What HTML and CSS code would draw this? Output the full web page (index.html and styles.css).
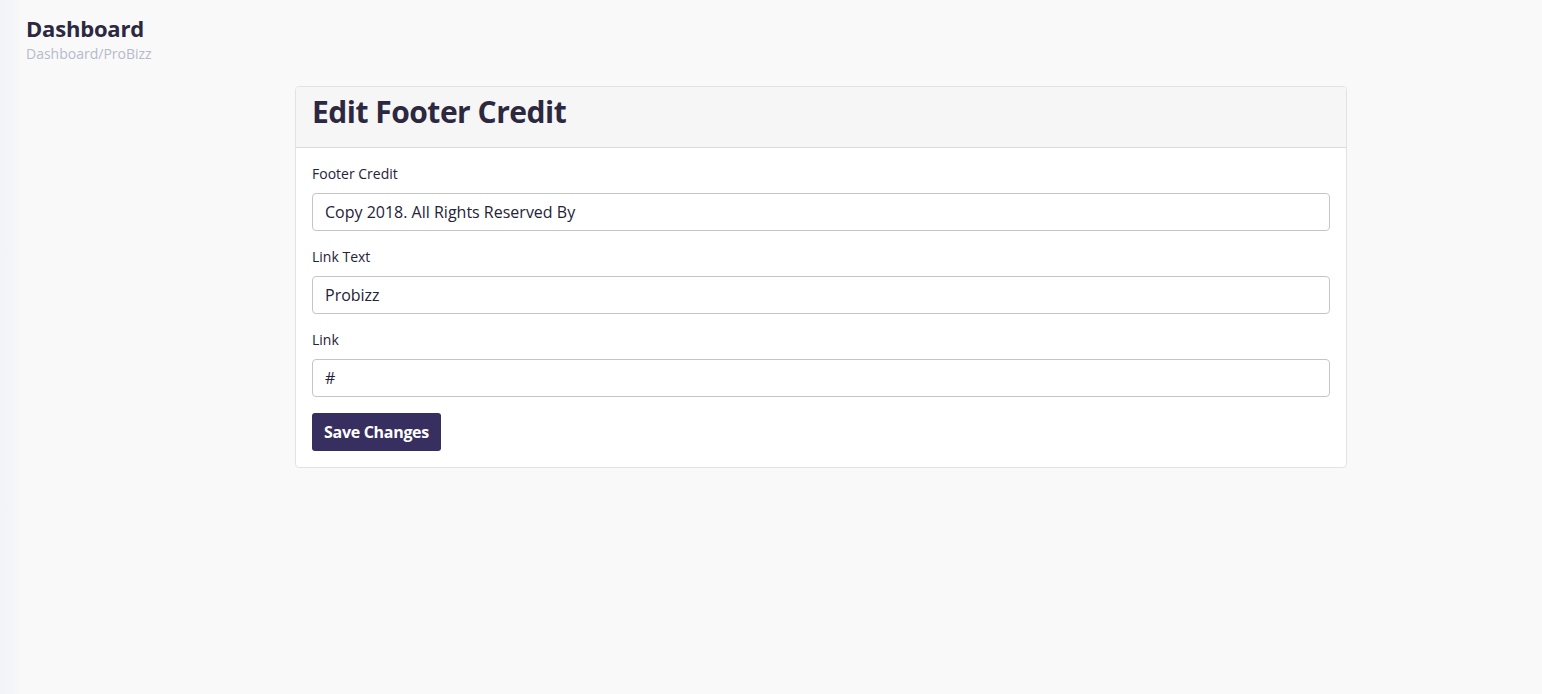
FILE: index.html
```html
<!DOCTYPE html>
<html>
<head>
<meta charset="utf-8">
<link rel="stylesheet" href="styles.css">
</head>
<body>
<div class="layout">
  <div class="edge"></div>
  <main class="main">
    <header class="page-head">
      <h1 class="page-title">Dashboard</h1>
      <div class="crumb">Dashboard/ProBizz</div>
    </header>
    <div class="content">
      <section class="card">
        <div class="card-head">
          <h2 class="card-title">Edit Footer Credit</h2>
        </div>
        <form class="card-body">
          <div class="field">
            <label class="label">Footer Credit</label>
            <input class="input" type="text" value="Copy 2018. All Rights Reserved By">
          </div>
          <div class="field">
            <label class="label">Link Text</label>
            <input class="input" type="text" value="Probizz">
          </div>
          <div class="field">
            <label class="label">Link</label>
            <input class="input" type="text" value="#">
          </div>
          <button class="btn" type="button">Save Changes</button>
        </form>
      </section>
    </div>
  </main>
</div>
</body>
</html>
```

FILE: styles.css
```css
* { box-sizing: border-box; }
html, body { margin: 0; height: 100%; }
body {
  background: #f9f9f9;
  font-family: "Open Sans", "Noto Sans", sans-serif;
  color: #2d2a42;
}
.layout { display: flex; min-height: 694px; }
.edge {
  width: 20px;
  flex: none;
  background: linear-gradient(to right, #f2f4f8 0%, #f4f5f8 60%, #f8f8f9 100%);
}
.main { flex: 1; padding: 13px 0 0 6px; }
.page-title {
  margin: 0;
  font-size: 22px;
  line-height: 30px;
  font-weight: 700;
  color: #2c2840;
  letter-spacing: -0.2px;
}
.crumb {
  font-size: 14px;
  line-height: 20px;
  color: #b5b9cd;
  margin-top: 1px;
}
.content { padding: 22px 0 0 269px; }
.card {
  width: 1052px;
  background: #fff;
  border: 1px solid #e3e3e3;
  border-radius: 4px;
  overflow: hidden;
}
.card-head {
  background: #f6f6f6;
  border-bottom: 1px solid #dcdcdc;
  height: 61px;
  padding: 0 16px 11px;
  display: flex;
  align-items: center;
}
.card-title {
  margin: 0;
  font-size: 30px;
  font-weight: 700;
  color: #2c2840;
  letter-spacing: -0.5px;
}
.card-body { padding: 16px 16px 16px 16px; }
.field { margin-bottom: 16px; }
.label {
  display: block;
  font-size: 14px;
  line-height: 20px;
  color: #25223a;
  margin-bottom: 9px;
}
.input {
  display: block;
  width: 100%;
  height: 38px;
  border: 1px solid #c3c5cc;
  border-radius: 4px;
  padding: 0 12px;
  font-family: inherit;
  font-size: 16px;
  color: #25223a;
  background: #fff;
  outline: none;
}
.btn {
  display: block;
  height: 38px;
  padding: 0 12px;
  background: #372f60;
  color: #fff;
  border: none;
  border-radius: 3px;
  font-family: inherit;
  font-size: 16px;
  font-weight: 700;
  letter-spacing: -0.3px;
}
```
